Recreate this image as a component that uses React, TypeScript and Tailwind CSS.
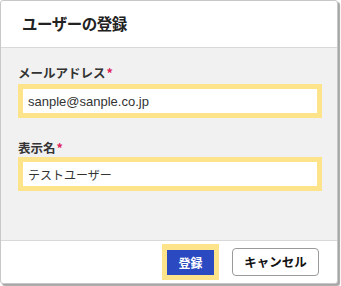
import React from "react";

const font = { fontFamily: '"Noto Sans CJK JP", "Liberation Sans", sans-serif' };

export default function App() {
  return (
    <div className="w-[341px] h-[286px] bg-white" style={font}>
      <div className="w-[338px] h-[284px] border border-[#c8c8c8] rounded-[3px] shadow-[2px_2px_1px_rgba(0,0,0,0.35)] flex flex-col overflow-hidden bg-white">
        <div className="h-[47px] border-b border-[#d9d9d9] flex items-center pl-[21px]">
          <span className="text-[15.5px] font-bold text-[#222] tracking-[-0.5px]">ユーザーの登録</span>
        </div>
        <div className="flex-1 bg-[#f1f1f1] border-b border-[#d9d9d9] pl-[17px] pt-[17px]">
          <label className="block text-[12.5px] leading-[16px] font-bold text-[#333]">
            メールアドレス<span className="text-[#e0245e] ml-[1px]">*</span>
          </label>
          <input
            readOnly
            value="sanple@sanple.co.jp"
            className="mt-[3px] block w-[304px] h-[34px] border-[5px] border-[#fde48a] bg-white px-[5px] text-[13px] text-[#333] outline-none"
            style={{ fontFamily: '"Liberation Sans", "Noto Sans CJK JP", sans-serif' }}
          />
          <label className="block mt-[22px] text-[12.5px] leading-[16px] font-bold text-[#333]">
            表示名<span className="text-[#e0245e] ml-[1px]">*</span>
          </label>
          <input
            readOnly
            value="テストユーザー"
            className="mt-[1px] block w-[304px] h-[34px] border-[5px] border-[#fde48a] bg-white px-[5px] text-[12px] text-[#333] outline-none"
            style={font}
          />
        </div>
        <div className="h-[42px] flex items-center justify-end pr-[18px] gap-[13px]">
          <div className="bg-[#fde48a] p-[5px]">
            <button className="w-[47px] h-[25px] bg-[#2b49c0] text-white text-[12px] font-bold leading-none">
              登録
            </button>
          </div>
          <button className="w-[87px] h-[28px] bg-white border border-[#9a9a9a] rounded-[4px] text-[12.5px] font-bold text-[#111] leading-none">
            キャンセル
          </button>
        </div>
      </div>
    </div>
  );
}
